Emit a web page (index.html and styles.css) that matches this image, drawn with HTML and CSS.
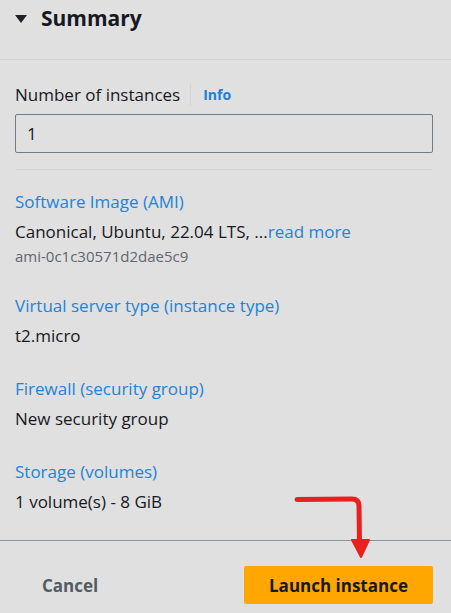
FILE: index.html
```html
<!DOCTYPE html>
<html>
<head>
<meta charset="utf-8">
<link rel="stylesheet" href="styles.css">
</head>
<body>
<div class="panel">
  <div class="header">
    <span class="caret"></span>
    <h2 class="title">Summary</h2>
  </div>
  <div class="content">
    <div class="field-label">
      <span>Number of instances</span>
      <span class="sep"></span>
      <a class="info">Info</a>
    </div>
    <div class="input">1</div>
    <div class="divider"></div>
    <div class="item">
      <div class="key">Software Image (AMI)</div>
      <div class="val">Canonical, Ubuntu, 22.04 LTS, ...<a class="more">read more</a></div>
      <div class="sub">ami-0c1c30571d2dae5c9</div>
    </div>
    <div class="item">
      <div class="key">Virtual server type (instance type)</div>
      <div class="val">t2.micro</div>
    </div>
    <div class="item">
      <div class="key">Firewall (security group)</div>
      <div class="val">New security group</div>
    </div>
    <div class="item">
      <div class="key">Storage (volumes)</div>
      <div class="val">1 volume(s) - 8 GiB</div>
    </div>
  </div>
  <div class="footer">
    <button class="btn-cancel">Cancel</button>
    <button class="btn-launch">Launch instance</button>
  </div>
  <svg class="arrow" width="451" height="613" viewBox="0 0 451 613">
    <path d="M297 499.5 L352 499 Q359 499 359 506 L359.5 544" fill="none" stroke="#e8201f" stroke-width="5" stroke-linecap="round"/>
    <path d="M352 540 L369 540 L361 557 Z" fill="#e8201f" stroke="#e8201f" stroke-width="2" stroke-linejoin="round"/>
  </svg>
</div>
</body>
</html>
```
FILE: styles.css
```css
html, body {
  margin: 0;
  padding: 0;
  background: #e0e0e0;
}
body {
  font-family: "Open Sans", "Noto Sans", sans-serif;
  color: #16191f;
  width: 451px;
  height: 613px;
  overflow: hidden;
}
.panel {
  position: relative;
  height: 613px;
}
.header {
  display: flex;
  align-items: center;
  gap: 14px;
  padding: 0 15px;
  height: 60px;
  box-sizing: border-box;
  padding-bottom: 23px;
  border-bottom: 1px solid #d5d5d5;
}
.caret {
  width: 0;
  height: 0;
  border-left: 6px solid transparent;
  border-right: 6px solid transparent;
  border-top: 8px solid #1f2227;
  margin-top: 2px;
}
.title {
  margin: 0;
  font-size: 21px;
  font-weight: 700;
  line-height: 26px;
  color: #16191f;
}
.content {
  padding: 24px 18px 0 15px;
  height: 481px;
  box-sizing: border-box;
  border-bottom: 1px solid #8c939b;
}
.field-label {
  display: flex;
  align-items: center;
  font-size: 17px;
  line-height: 22px;
  color: #16191f;
}
.sep {
  width: 1px;
  height: 22px;
  background: #d2d2d2;
  margin: 0 12px 0 10px;
}
.info {
  color: #1a7fd8;
  font-weight: 700;
  font-size: 14px;
}
.input {
  margin-top: 8px;
  height: 39px;
  box-sizing: border-box;
  border: 1px solid #737b84;
  border-radius: 2px;
  padding: 0 11px;
  font-size: 17px;
  line-height: 37px;
  color: #16191f;
}
.divider {
  margin-top: 16px;
  height: 1px;
  background: #d5d5d5;
}
.item {
  margin-top: 21px;
}
.item + .item {
  margin-top: 31px;
}
.item:nth-child(5) {
  margin-top: 30px;
}
.key {
  font-size: 17px;
  line-height: 22px;
  color: #2383d9;
}
.val {
  margin-top: 8px;
  font-size: 17px;
  line-height: 22px;
  color: #16191f;
}
.more {
  color: #2383d9;
}
.sub {
  margin-top: 4px;
  font-size: 15px;
  line-height: 18px;
  color: #5f6770;
}
.footer {
  display: flex;
  justify-content: flex-end;
  align-items: center;
  padding: 25px 18px 0 15px;
}
.btn-cancel {
  background: none;
  border: none;
  font-family: inherit;
  font-size: 17px;
  font-weight: 700;
  color: #545b64;
  width: 110px;
  margin-right: 119px;
  padding: 0;
  text-align: center;
  height: 38px;
}
.btn-launch {
  background: #ffa700;
  border: none;
  border-radius: 2px;
  font-family: inherit;
  font-size: 17px;
  font-weight: 700;
  color: #16191f;
  width: 189px;
  height: 38px;
  padding: 0;
}
.arrow {
  position: absolute;
  left: 0;
  top: 0;
  pointer-events: none;
}
```
